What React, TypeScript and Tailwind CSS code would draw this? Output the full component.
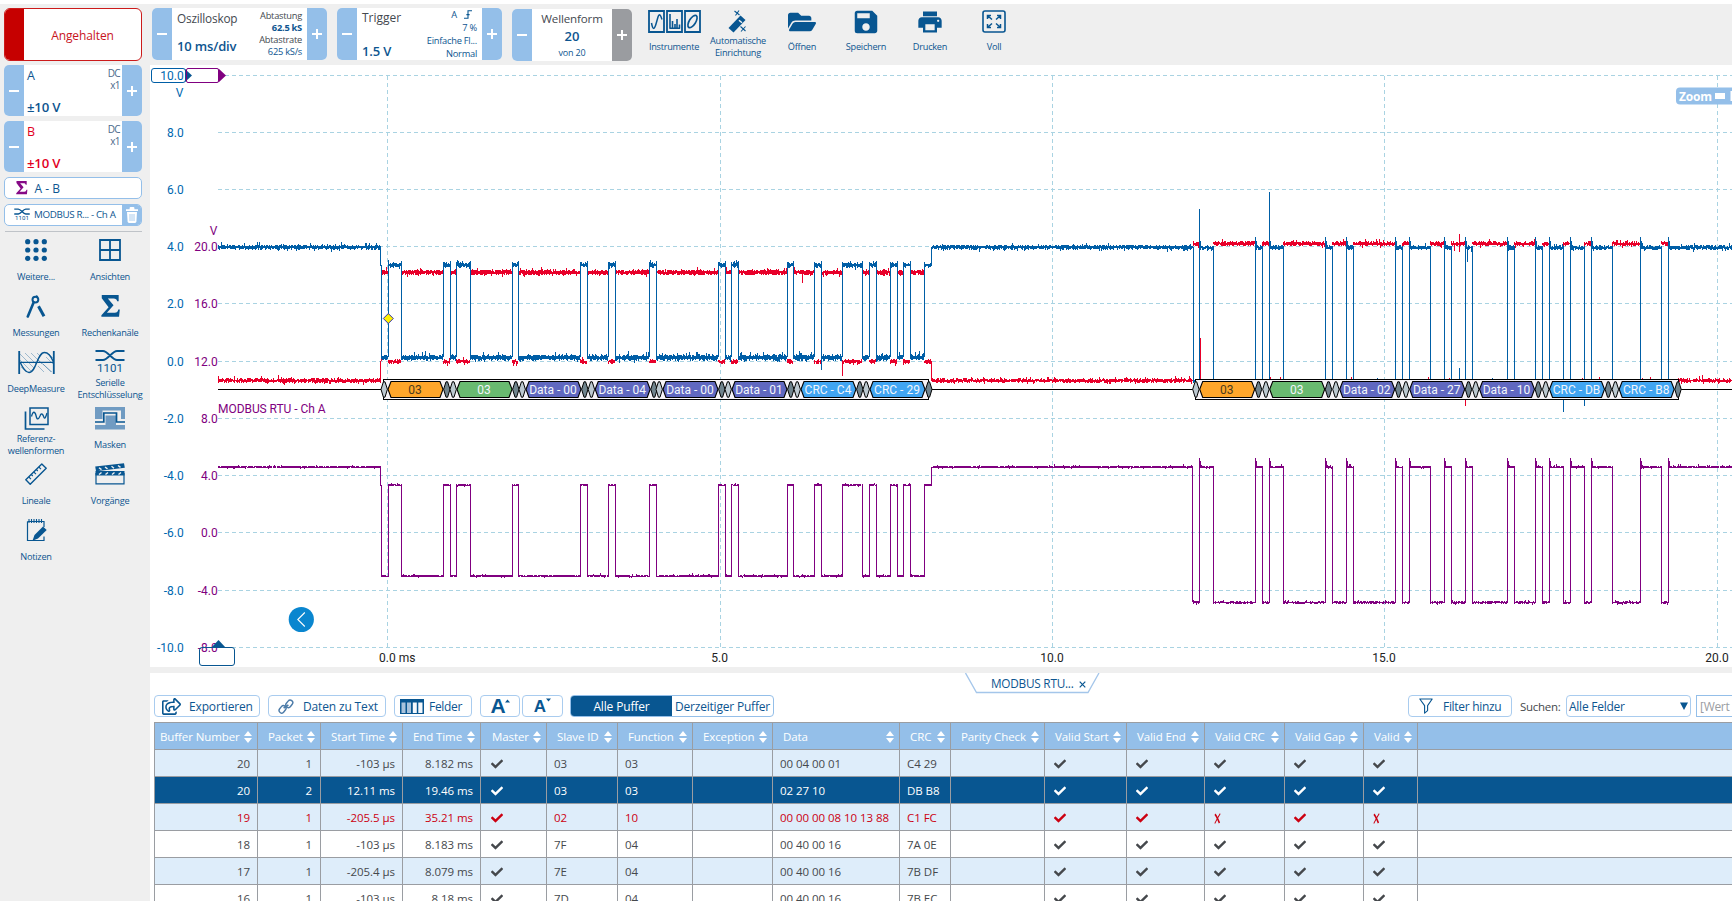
import React from 'react';
import { FaCheck, FaFolderOpen, FaRegShareSquare } from 'react-icons/fa';
import { MdPrint, MdSave } from 'react-icons/md';

/* ---------- shared pieces ---------- */

const NAVY = '#085691';

function Sign({ plus }: { plus?: boolean }) {
  return (
    <svg width="12" height="12" viewBox="0 0 12 12" shapeRendering="crispEdges" fill="#fff">
      <rect x="1" y="5" width="10" height="2" />
      {plus && <rect x="5" y="1" width="2" height="10" />}
    </svg>
  );
}

function Stepper({ children, className, gray }: { children: React.ReactNode; className: string; gray?: boolean }) {
  return (
    <div className={`flex shrink-0 overflow-hidden rounded-[5px] bg-white ${className}`}>
      <div className="flex w-5 shrink-0 items-center justify-center bg-[#94bfe9]">
        <Sign />
      </div>
      <div className="min-w-0 flex-1">{children}</div>
      <div className={`flex w-5 shrink-0 items-center justify-center ${gray ? 'bg-[#9a9ca0]' : 'bg-[#94bfe9]'}`}>
        <Sign plus />
      </div>
    </div>
  );
}

function Sigma({ size, color }: { size: number; color: string }) {
  return (
    <svg width={size} height={size * 1.15} viewBox="0 0 20 23" fill={color}>
      <path d="M.8 0H18.6V6.6H17C16.6 4.6 15.6 3.7 13.2 3.7H7.2L13.2 10.8 6.2 18.6H14.4C16.7 18.6 17.7 17.5 18.2 15.2H19.8L19 23H.4V21.4L8 12.9 .8 3.4Z" />
    </svg>
  );
}

function SerialIcon({ width, height, stroke }: { width: number; height: number; stroke: number }) {
  return (
    <svg width={width} height={height} viewBox="0 0 30 26">
      <path
        d="M.5 2H8C13 2 17 11 22 11H29.5M.5 11H8C13 11 17 2 22 2H29.5"
        fill="none"
        stroke={NAVY}
        strokeWidth={stroke}
      />
      <text x="2" y="22.8" fontSize="11.5" textLength="26" fill={NAVY} fontFamily="Roboto, sans-serif">
        1101
      </text>
    </svg>
  );
}

/* ---------- sidebar ---------- */

function Channel({ name, tone, className }: { name: string; tone: string; className: string }) {
  return (
    <Stepper className={`h-[51px] w-[138px] ${className}`}>
      <div className="flex h-full justify-between pr-[2px] pl-[3px]">
        <div className={`flex flex-col justify-between ${tone}`}>
          <span className="pt-[3px] text-[12.5px] leading-[16px] font-medium">{name}</span>
          <span className="text-[13.2px] leading-[17px] font-semibold tracking-[-0.2px]">±10 V</span>
        </div>
        <div className="pt-[2px] text-right text-[10px] leading-[12px] tracking-[-0.6px] text-[#4b6a8a]">
          <div>DC</div>
          <div>x1</div>
        </div>
      </div>
    </Stepper>
  );
}

const sideIcons: Record<string, React.ReactNode> = {
  more: (
    <svg width="22" height="22" viewBox="0 0 22 22" fill={NAVY}>
      {[2.7, 11, 19.3].map((y) => [2.7, 11, 19.3].map((x) => <circle key={`${x}-${y}`} cx={x} cy={y} r="2.6" />))}
    </svg>
  ),
  views: (
    <svg width="22" height="22" viewBox="0 0 22 22" fill="none" stroke={NAVY} strokeWidth="1.8">
      <path d="M1 1H21V21H1ZM11 1V21M1 11H21" />
    </svg>
  ),
  measure: (
    <svg width="20" height="23" viewBox="0 0 20 23" fill="none" stroke={NAVY}>
      <circle cx="9.4" cy="4.6" r="2.9" strokeWidth="2" />
      <path d="M9.8 2.5L11.5 .8" strokeWidth="2" />
      <path d="M7.6 7.5L1.8 21.5" strokeWidth="2.6" strokeLinecap="round" />
      <path d="M12.5 11.2L18 21.3" strokeWidth="3" />
    </svg>
  ),
  math: <Sigma size={19} color={NAVY} />,
  deep: (
    <svg width="37" height="23" viewBox="0 0 37 23" fill="none" stroke={NAVY}>
      <path
        d="M2 3L16 17M2 9L14 21M7 2L18 13M13 2L24 13M19 8L34 21M19 2L22 5M25 13L33 21M28 6L35 13M31 3L35 7M20 15L26 21M3 16L8 21"
        strokeWidth=".6"
        opacity=".6"
      />
      <path d="M1.2 0V23M35.8 0V23" strokeWidth="1.8" />
      <path d="M1 11.3H36" strokeWidth="1.3" />
      <path d="M2 11C5 17.5 8 21.5 11 21.5C18.5 21.5 19 1.5 26.5 1.5C30 1.5 33 5 35.5 11" strokeWidth="1.4" />
    </svg>
  ),
  serial: <SerialIcon width={30} height={26} stroke={1.8} />,
  ref: (
    <svg width="25" height="23" viewBox="0 0 25 23" fill="none" stroke={NAVY}>
      <path d="M6 1H24V17.5H6Z" strokeWidth="1.5" />
      <path d="M1.5 4.5V22H20.5" strokeWidth="1.7" />
      <path d="M7.5 9.5C9 3.5 11 4.5 12 8.5C13 13.5 14.5 12.5 16 9C17.5 5 19 7.5 20 10.5C20.8 12.5 22 9.5 23 6" strokeWidth="1.3" />
    </svg>
  ),
  masks: (
    <svg width="30" height="23" viewBox="0 0 30 23">
      <path d="M0 0H30V12H26V3.5H7.5V12H0Z" fill="#709bc2" />
      <path d="M0 18H10.5V8.5H21V18H30V22.5H0Z" fill="#709bc2" />
      <path d="M0 15H8.8V6H21.5V15H30" fill="none" stroke={NAVY} strokeWidth="1.7" />
    </svg>
  ),
  rulers: (
    <svg width="22" height="22" viewBox="0 0 22 22" fill="none" stroke={NAVY} strokeWidth="1.4">
      <path d="M.8 16.8L16.8 .9L21.2 5.2L5.2 21.2Z" strokeLinejoin="round" />
      <path d="M3.8 14L6 16.2M6.3 11.5L7.8 13M8.8 9L11 11.2M11.3 6.5L12.8 8M13.8 4L16 6.2" strokeWidth="1.1" />
    </svg>
  ),
  actions: (
    <svg width="30" height="22" viewBox="0 0 30 22">
      <path d="M1 10.5H29V20.8H1Z" fill="none" stroke={NAVY} strokeWidth="1.2" />
      <path d="M.5 8H29.5V12.5H.5Z" fill={NAVY} />
      <path d="M.2 3.5L29 .2L29.8 4.8L1 8.2Z" fill={NAVY} />
      <path
        d="M4 4.7L6.5 6.6M10 4L12.5 5.9M16.5 3.3L19 5.2M23 2.5L25.5 4.4M4 11.5L6.5 9.5M10.5 11.5L13 9.5M17 11.5L19.5 9.5M23.5 11.5L26 9.5"
        stroke="#efefef"
        strokeWidth="1.4"
      />
    </svg>
  ),
  notes: (
    <svg width="21" height="23" viewBox="0 0 21 23">
      <path d="M1.5 2.5H18V8M18 17.5V21.5H1.5V2.5" fill="none" stroke={NAVY} strokeWidth="1.2" />
      <path d="M3 0V4M5.5 0V4M8 0V4M10.5 0V4M13 0V4M15.5 0V4" stroke={NAVY} strokeWidth="1.1" />
      <path d="M6.5 21.8L8.5 16L17 7.5L20.7 11L12 19.5Z" fill={NAVY} />
    </svg>
  ),
};

const sideItems: [string, string[]][] = [
  ['more', ['Weitere...']],
  ['views', ['Ansichten']],
  ['measure', ['Messungen']],
  ['math', ['Rechenkanäle']],
  ['deep', ['DeepMeasure']],
  ['serial', ['Serielle', 'Entschlüsselung']],
  ['ref', ['Referenz-', 'wellenformen']],
  ['masks', ['Masken']],
  ['rulers', ['Lineale']],
  ['actions', ['Vorgänge']],
  ['notes', ['Notizen']],
];

function Sidebar() {
  return (
    <aside className="flex w-[150px] shrink-0 flex-col bg-[#efefef] pt-1 text-[#0d5590]">
      <div className="ml-1 flex h-[53px] w-[138px] shrink-0 overflow-hidden rounded-[6px] border border-[#cc1a1a] bg-white">
        <div className="w-[19px] bg-[#c60000]" />
        <div className="flex flex-1 items-center justify-center pt-[2px] text-[12px] tracking-[-0.1px] text-[#c8141c]">
          Angehalten
        </div>
      </div>
      <Channel name="A" tone="text-[#0d5590]" className="mt-1 ml-1" />
      <Channel name="B" tone="text-[#e2001f]" className="mt-[5px] ml-1" />
      <div className="mt-[5px] ml-1 flex h-[22px] w-[138px] shrink-0 items-center rounded-[5px] border border-[#94bfe9] bg-white pl-[11px]">
        <Sigma size={11.5} color="#860a86" />
        <span className="ml-[7px] pt-px text-[12px] font-medium">A - B</span>
      </div>
      <div className="mt-[5px] ml-1 flex h-[22px] w-[138px] shrink-0 overflow-hidden rounded-[5px] border border-[#94bfe9] bg-white">
        <div className="flex flex-1 items-center pl-[9px]">
          <SerialIcon width={16} height={14} stroke={2.6} />
          <span className="ml-[4px] pt-px text-[9.8px] font-medium tracking-[-0.35px] whitespace-nowrap">
            MODBUS R... - Ch A
          </span>
        </div>
        <div className="flex w-[19px] items-center justify-center bg-[#94bfe9]">
          <svg width="12" height="16" viewBox="0 0 12 16" fill="#fff">
            <path d="M0 2.2H3.6V1Q3.6 0 4.6 0H7.4Q8.4 0 8.4 1V2.2H12V4H0Z" />
            <path d="M1 5H11L10.4 14.6Q10.3 16 9 16H3Q1.7 16 1.6 14.6Z" />
            <path d="M4 7V14M6 7V14M8 7V14" stroke="#94bfe9" strokeWidth=".8" />
          </svg>
        </div>
      </div>
      <div className="mt-[5px] ml-[5px] h-px w-[137px] shrink-0 bg-[#bfc3c8]" />
      <div className="mt-1 grid auto-rows-[56px] grid-cols-[72px_76px]">
        {sideItems.map(([key, lines]) => (
          <div key={key} className="flex flex-col items-center">
            <div className="mt-[2px] flex h-6 items-center justify-center">{sideIcons[key]}</div>
            <div className="mt-px flex h-[27px] flex-col justify-center text-center text-[9.2px] leading-[12px] tracking-[-0.25px] whitespace-nowrap">
              {lines.map((l) => (
                <div key={l}>{l}</div>
              ))}
            </div>
          </div>
        ))}
      </div>
    </aside>
  );
}

/* ---------- top bar ---------- */

const tools: [string[], React.ReactNode][] = [
  [
    ['Instrumente'],
    <svg key="i" width="53" height="23" viewBox="0 0 53 23" fill="none" stroke={NAVY}>
      <path d="M1 1H16V22H1ZM19 1H34V22H19ZM37 1H52V22H37Z" strokeWidth="1.8" />
      <path d="M3.5 13C5 21 6.5 19 8 14L10 7C11.5 3 12.5 5 14 9.5" strokeWidth="1.5" />
      <path d="M22 4V18.5M24.5 11V18.5M27 14V18.5M29 9V18.5M31.5 14.5V18.5M21.5 18.3H32" strokeWidth="1.6" />
      <ellipse cx="44.5" cy="11.5" rx="3.2" ry="7" transform="rotate(32 44.5 11.5)" strokeWidth="1.7" />
    </svg>,
  ],
  [
    ['Automatische', 'Einrichtung'],
    <svg key="a" width="20" height="23" viewBox="0 0 20 23">
      <path d="M.5 18L12.5 5.5L17.5 10L5.5 22.5Z" fill={NAVY} />
      <path d="M11 10.2L14 12.8" stroke="#efefef" strokeWidth="1.5" />
      <path d="M6.5 1L11.5 5M11 .5L7.5 5.5M12.5 16.5L17.5 21M17.5 16.5L13 21.5" stroke={NAVY} strokeWidth="1.1" />
    </svg>,
  ],
  [['Öffnen'], <FaFolderOpen key="o" size={28} color={NAVY} />],
  [['Speichern'], <MdSave key="s" size={30} color={NAVY} />],
  [['Drucken'], <MdPrint key="p" size={28} color={NAVY} />],
  [
    ['Voll'],
    <svg key="v" width="24" height="23" viewBox="0 0 24 23" fill="none" stroke={NAVY}>
      <rect x="1" y="1" width="22" height="21" rx="2" strokeWidth="1.6" />
      <path d="M5.5 9V5.5H9M6 6L10 9.5M15 5.5H18.5V9M18 6L14 9.5M5.5 14V17.5H9M6 17L10 13.5M18.5 14V17.5H15M18 17L14 13.5" strokeWidth="1.5" />
    </svg>,
  ],
];

function TopBar() {
  return (
    <header className="flex h-[61px] shrink-0 bg-[#efefef] pt-1 pl-[2px] text-[#0d5590]">
      <Stepper className="h-[52px] w-[175px]">
        <div className="flex h-full justify-between pr-[5px] pl-[5px] whitespace-nowrap">
          <div>
            <div className="pt-[2px] text-[11.8px] leading-[17px] tracking-[-0.2px] text-[#44494f]">Oszilloskop</div>
            <div className="mt-[11px] text-[13px] leading-[17px] font-semibold tracking-[-0.15px]">10 ms/div</div>
          </div>
          <div className="pt-[2px] text-right text-[9.3px] leading-[12px] tracking-[-0.25px]">
            <div className="text-[#44494f]">Abtastung</div>
            <div className="font-bold">62.5 kS</div>
            <div className="text-[#44494f]">Abtastrate</div>
            <div>625 kS/s</div>
          </div>
        </div>
      </Stepper>
      <Stepper className="ml-[10px] h-[52px] w-[165px]">
        <div className="flex h-full justify-between pr-[5px] pl-[5px] whitespace-nowrap">
          <div>
            <div className="pt-px text-[12px] leading-[17px] text-[#44494f]">Trigger</div>
            <div className="mt-[17px] text-[13px] leading-[17px] font-semibold tracking-[-0.15px]">1.5 V</div>
          </div>
          <div className="text-right text-[9.3px] leading-[13px] tracking-[-0.25px]">
            <div className="flex items-center justify-end gap-[7px] pr-[5px]">
              <span>A</span>
              <svg width="8" height="9" viewBox="0 0 8 9" fill="none" stroke={NAVY} strokeWidth="1.1">
                <path d="M0 8.3H4V.8H8M2.4 4.6H5.6" />
              </svg>
            </div>
            <div>7 %</div>
            <div>Einfache Fl...</div>
            <div>Normal</div>
          </div>
        </div>
      </Stepper>
      <Stepper className="mt-px ml-[10px] h-[52px] w-[120px]" gray>
        <div className="flex flex-col items-center">
          <div className="pt-px text-[11.6px] leading-[17px] tracking-[-0.15px] text-[#44494f]">Wellenform</div>
          <div className="mt-px text-[13px] leading-4 font-semibold">20</div>
          <div className="mt-[2px] text-[9px] leading-[14px] tracking-[-0.2px]">von 20</div>
        </div>
      </Stepper>
      <div className="ml-[10px] flex">
        {tools.map(([lines, icon]) => (
          <div key={lines[0]} className="flex w-16 flex-col items-center">
            <div className="mt-[1px] flex h-[25px] items-center justify-center">{icon}</div>
            <div className="mt-px flex h-[24px] flex-col justify-center text-center text-[9.2px] leading-[12px] tracking-[-0.25px] whitespace-nowrap">
              {lines.map((l) => (
                <div key={l}>{l}</div>
              ))}
            </div>
          </div>
        ))}
      </div>
    </header>
  );
}

/* ---------- waveform view ---------- */

const BLUE = '#005ea6';
const RED = '#e8002a';
const PURPLE = '#800080';

function rng(seed: number) {
  let s = seed;
  return () => {
    s = (s * 1664525 + 1013904223) % 4294967296;
    return s / 4294967296;
  };
}

// One vertical stroke per pixel column, as a sampled trace is rasterised.
function band(x0: number, x1: number, y: number, amp: number, rand: () => number) {
  let d = '';
  for (let x = Math.floor(x0); x < x1; x++) {
    const r = rand();
    const spike = r > 0.94 ? amp * 1.1 : 0;
    const up = amp * (0.35 + rand() * 0.85) + spike;
    const down = amp * (0.35 + rand() * 0.85) + (r < 0.05 ? amp * 0.8 : 0);
    d += `M${x + 0.5} ${(y - up).toFixed(1)}V${(y + down).toFixed(1)}`;
  }
  return d;
}

// Alternating x positions: rise, fall, rise, fall ...
const burst1 = [
  388, 401, 443, 450, 456, 470, 512, 518, 580, 587, 608, 615, 649, 656, 718, 725, 731, 738, 787, 793, 814, 821, 842, 862,
  869, 876, 890, 897, 903, 910, 924, 931,
];
const burst2 = [
  1199, 1213, 1255, 1262, 1269, 1283, 1325, 1332, 1346, 1353, 1395, 1402, 1409, 1430, 1444, 1451, 1465, 1472, 1507, 1514,
  1535, 1542, 1549, 1563, 1570, 1584, 1591, 1612, 1640, 1661, 1668,
];

function buildTraces() {
  const r = rng(7);
  let blue = band(218, 381, 247.2, 2.2, r);
  let red = band(218, 381, 380.5, 2.2, r);
  let purple = band(218, 381, 467, 1.2, r);
  blue += 'M380.5 247V266M381.5 265V357';
  red += 'M380.5 380V361M381.5 361V272';
  purple += 'M380.5 467V486M381.5 485V576';

  let low = 381;
  for (let i = 0; i < burst1.length; i += 2) {
    const [up, down] = [burst1[i], burst1[i + 1]];
    blue += band(low, up, 357.5, 2.8, r) + band(up, down, 265, 2.4, r);
    red += band(low, up, 272.4, 2.6, r) + band(up, down, 361.5, 2.2, r);
    purple += band(low, up, 576, 1.2, r) + band(up, down, 485, 1.1, r);
    blue += `M${up + 0.5} 262V357`;
    purple += `M${up + 0.5} 484V577`;
    if (i < burst1.length - 2) {
      blue += `M${down + 0.5} 261V357`;
      purple += `M${down + 0.5} 484V577`;
    }
    low = down;
  }
  blue += 'M931.5 266V247M821.5 357V370M793.5 349V357';
  red += 'M931.5 361V381M842.5 361V376M802.5 272V283';
  purple += 'M931.5 486V467';

  blue += band(932, 1193, 247.2, 2.2, r);
  red += band(932, 1193, 380.5, 2, r);
  purple += band(932, 1193, 467, 1.2, r);
  blue += 'M1193.5 247V381';
  purple += 'M1192.5 467V602';

  low = 1193;
  for (let i = 0; i < burst2.length; i += 2) {
    const up = burst2[i];
    const down = burst2[i + 1] ?? 1732;
    red += band(low, up, 243.6, 2.2, r) + band(up, down, down === 1732 ? 380.5 : 381.2, 2, r);
    blue += band(up, down, 247.5, 2.2, r) + band(low, up, 381.5, 1.4, r);
    purple += band(low, up, 602.4, 1.3, r) + band(up, down, 467, 1.2, r);
    blue += `M${up + 0.5} 237V390M${up + 1.5} 241V248`;
    purple += `M${up + 0.5} 458V603M${up + 1.5} 461V468`;
    if (down !== 1732) {
      blue += `M${down + 0.5} 246V390`;
      purple += `M${down + 0.5} 466V604`;
    }
    low = down;
  }
  blue += 'M1199.5 209V240M1269.5 192V240M1467.5 247V262M1459.5 368V381M1563.5 390V412M1584.5 390V406';
  red += 'M1200.5 338V381M1459.5 234V252M1454.5 243V251M1465.5 390V406M1702.5 375V381';
  return { blue, red, purple };
}

const traces = buildTraces();

type Packet = [number, string, string];
const packets1: Packet[] = [
  [388, '03', '#ffa62b'],
  [457, '03', '#69ba70'],
  [526, 'Data - 00', '#6068c0'],
  [595.2, 'Data - 04', '#6068c0'],
  [663, 'Data - 00', '#6068c0'],
  [732, 'Data - 01', '#6068c0'],
  [801, 'CRC - C4', '#41a5f2'],
  [870, 'CRC - 29', '#41a5f2'],
];
const packets2: Packet[] = [
  [1199.7, '03', '#ffa62b'],
  [1269.7, '03', '#69ba70'],
  [1339.7, 'Data - 02', '#6068c0'],
  [1409.7, 'Data - 27', '#6068c0'],
  [1479.5, 'Data - 10', '#6068c0'],
  [1549.5, 'CRC - DB', '#41a5f2'],
  [1619.2, 'CRC - B8', '#41a5f2'],
];

function Diamond({ x, fill }: { x: number; fill: string }) {
  return (
    <path
      d={`M${x} 389.3L${x + 2.4} 381.8H${x + 4}L${x + 6.4} 389.3L${x + 4} 397.2H${x + 2.4}Z`}
      fill={fill}
      stroke="#000"
      strokeWidth="1"
    />
  );
}

function Decoder({ x0, x1, packets }: { x0: number; x1: number; packets: Packet[] }) {
  return (
    <g>
      <rect x={x0} y="379.5" width={x1 - x0} height="20" fill="#f6f3f7" stroke="#000" shapeRendering="crispEdges" />
      {packets.map(([x, label, fill]) => (
        <g key={x}>
          <Diamond x={x - 7} fill="#bcc8d0" />
          <Diamond x={x + 55.6} fill="#70838d" />
          <path
            d={`M${x} 389.3L${x + 3} 381.5H${x + 52}L${x + 55} 389.3L${x + 52} 397.5H${x + 3}Z`}
            fill={fill}
            stroke="#000"
            strokeWidth="1.1"
          />
          <text
            x={x + 27}
            y="394"
            textAnchor="middle"
            fontSize={12}
            fill={fill === '#ffa62b' ? '#4b3a1c' : '#f2f6fb'}
          >
            {label}
          </text>
        </g>
      ))}
    </g>
  );
}

const gridY = [75.5, 132.5, 189.5, 246.5, 303.5, 361.5, 418.5, 475.5, 532.5, 590.5, 647.5];
const gridX = [387.5, 720.5, 1052.5, 1384.5, 1717.5];
const leftLabels = ['10.0', '8.0', '6.0', '4.0', '2.0', '0.0', '-2.0', '-4.0', '-6.0', '-8.0', '-10.0'];
const mathLabels = ['20.0', '16.0', '12.0', '8.0', '4.0', '0.0', '-4.0', '-8.0'];

function Scope() {
  return (
    <svg
      width="1582"
      height="602"
      viewBox="150 65 1582 602"
      className="block shrink-0 bg-white"
      fontFamily="Roboto, sans-serif"
      fontSize="12"
    >
      <g stroke="#a9d3e2" strokeDasharray="4 3" shapeRendering="crispEdges">
        {gridY.map((y) => (
          <path key={y} d={`M218 ${y}H1732`} />
        ))}
        {gridX.map((x) => (
          <path key={x} d={`M${x} 76V647`} />
        ))}
      </g>

      <g fill="#0068b0" textAnchor="end">
        {leftLabels.map((t, i) => (
          <text key={t} x="183.7" y={gridY[i] + 4.4}>
            {t}
          </text>
        ))}
        <text x="183.5" y="97">V</text>
      </g>
      <g fill={PURPLE} textAnchor="end">
        {mathLabels.map((t, i) => (
          <text key={t} x="217.7" y={gridY[i + 3] + 4.4}>
            {t}
          </text>
        ))}
        <text x="217.5" y="235">V</text>
      </g>
      <g fill="#222">
        <text x="379" y="662">0.0 ms</text>
        <text x="719.7" y="662" textAnchor="middle">5.0</text>
        <text x="1052" y="662" textAnchor="middle">10.0</text>
        <text x="1384" y="662" textAnchor="middle">15.0</text>
        <text x="1717" y="662" textAnchor="middle">20.0</text>
      </g>

      <path d="M218 389.5H1732" stroke="#000" shapeRendering="crispEdges" />
      <g fill="none" shapeRendering="crispEdges" strokeWidth="1">
        <path d={traces.red} stroke={RED} />
        <path d={traces.blue} stroke={BLUE} />
        <path d={traces.purple} stroke={PURPLE} />
      </g>
      <path d="M1200.5 338V379" stroke={RED} shapeRendering="crispEdges" />
      <Decoder x0={383.5} x1={928.5} packets={packets1} />
      <Decoder x0={1195.5} x1={1678.5} packets={packets2} />
      <path d="M1465.5 400V406" stroke={RED} shapeRendering="crispEdges" />

      <text x="218" y="413" fill={PURPLE} textLength="107.5">MODBUS RTU - Ch A</text>

      <path d="M388.3 313.5L393.3 318.5L388.3 323.5L383.3 318.5Z" fill="#fff200" stroke="#3030b0" />

      <rect x="151.5" y="68.5" width="34" height="14" rx="2.5" fill="none" stroke="#005ea6" />
      <path d="M185 69L192 75.5L185 82Z" fill="#085691" />
      <rect x="186.5" y="68.5" width="32" height="14" rx="1.5" fill="none" stroke={PURPLE} />
      <path d="M218.5 68.5L226 75.5L218.5 82.5Z" fill={PURPLE} />

      <rect x="199.5" y="647.5" width="35" height="18" rx="2.5" fill="none" stroke="#085691" />
      <path d="M211.5 647.5L218.5 640L225.5 647.5Z" fill="#085691" />

      <circle cx="301.3" cy="619.5" r="12.6" fill="#0a86cf" />
      <path d="M304.8 612.5L297.8 619.5L304.8 626.5" fill="none" stroke="#fff" strokeWidth="1.1" />

      <rect x="1676" y="87.5" width="70" height="17" rx="4" fill="#94bfe9" />
      <text x="1679" y="101" fill="#fff" fontFamily="'Open Sans', sans-serif" fontWeight="700" textLength="33">
        Zoom
      </text>
      <path d="M1715 93H1725V99H1715ZM1730.5 91H1732V101H1730.5Z" fill="#fff" />
    </svg>
  );
}

/* ---------- decode table ---------- */

const columns: [string, string][] = [
  ['Buffer Number', 'w-[104px] pl-[6px]'],
  ['Packet', 'w-[63px] pl-[10px]'],
  ['Start Time', 'w-[82px] pl-[10px]'],
  ['End Time', 'w-[78px] pl-[10px]'],
  ['Master', 'w-[66px] pl-[11px]'],
  ['Slave ID', 'w-[71px] pl-[10px]'],
  ['Function', 'w-[75px] pl-[10px]'],
  ['Exception', 'w-[80px] pl-[10px]'],
  ['Data', 'w-[127px] pl-[10px]'],
  ['CRC', 'w-[51px] pl-[10px]'],
  ['Parity Check', 'w-[94px] pl-[10px]'],
  ['Valid Start', 'w-[82px] pl-[10px]'],
  ['Valid End', 'w-[78px] pl-[10px]'],
  ['Valid CRC', 'w-[80px] pl-[10px]'],
  ['Valid Gap', 'w-[79px] pl-[10px]'],
  ['Valid', 'w-[54px] pl-[10px]'],
];

const cellBase = [
  'w-[104px] justify-end pr-[7px]',
  'w-[63px] justify-end pr-[8px]',
  'w-[82px] justify-end pr-[7px]',
  'w-[78px] justify-end pr-[7px]',
  'w-[66px] pl-[10px]',
  'w-[71px] pl-[7px]',
  'w-[75px] pl-[7px]',
  'w-[80px] pl-[7px]',
  'w-[127px] pl-[7px]',
  'w-[51px] pl-[7px]',
  'w-[94px] pl-[7px]',
  'w-[82px] pl-[9px]',
  'w-[78px] pl-[9px]',
  'w-[80px] pl-[9px]',
  'w-[79px] pl-[9px]',
  'w-[54px] pl-[9px]',
];

const rows: { tone: string; cells: string[] }[] = [
  { tone: 'bg-[#deedfa] text-[#45484c]', cells: ['20', '1', '-103 µs', '8.182 ms', 'y', '03', '03', '', '00 04 00 01', 'C4 29', '', 'y', 'y', 'y', 'y', 'y'] },
  { tone: 'bg-[#085691] text-white font-medium', cells: ['20', '2', '12.11 ms', '19.46 ms', 'y', '03', '03', '', '02 27 10', 'DB B8', '', 'y', 'y', 'y', 'y', 'y'] },
  { tone: 'bg-[#deedfa] text-[#cc0011]', cells: ['19', '1', '-205.5 µs', '35.21 ms', 'y', '02', '10', '', '00 00 00 08 10 13 88', 'C1 FC', '', 'y', 'y', 'n', 'y', 'n'] },
  { tone: 'bg-white text-[#45484c]', cells: ['18', '1', '-103 µs', '8.183 ms', 'y', '7F', '04', '', '00 40 00 16', '7A 0E', '', 'y', 'y', 'y', 'y', 'y'] },
  { tone: 'bg-[#deedfa] text-[#45484c]', cells: ['17', '1', '-205.4 µs', '8.079 ms', 'y', '7E', '04', '', '00 40 00 16', '7B DF', '', 'y', 'y', 'y', 'y', 'y'] },
  { tone: 'bg-white text-[#45484c]', cells: ['16', '1', '-103 µs', '8.18 ms', 'y', '7D', '04', '', '00 40 00 16', '7B EC', '', 'y', 'y', 'y', 'y', 'y'] },
];

function CellValue({ v }: { v: string }) {
  if (v === 'y') return <FaCheck size={12} />;
  if (v === 'n')
    return (
      <svg width="7" height="11" viewBox="0 0 9 11" preserveAspectRatio="none" fill="none" stroke="currentColor">
        <path d="M1.2 1.2C3.5 3 5.5 7 7 10" strokeWidth="1.9" />
        <path d="M8 .6C5.5 3.5 3.5 6.5 1 10.5" strokeWidth="1.2" />
      </svg>
    );
  return <span>{v}</span>;
}

function DecodeTable() {
  return (
    <div className="ml-1 w-[1578px] border-t border-l border-[#9a9da2] text-[11.5px] tracking-[-0.05px] whitespace-nowrap">
      <div className="flex h-[27px] border-b border-[#9a9da2] bg-[#94bfe9] text-white">
        {columns.map(([name, cls], i) => (
          <div
            key={name}
            className={`flex shrink-0 items-center justify-between border-r border-[#9a9da2] pt-[2px] pr-[5px] ${cls} ${i === 0 ? '-ml-px' : ''}`}
          >
            <span className="tracking-[-0.1px]">{name}</span>
            <svg width="8" height="12" viewBox="0 0 8 12" fill="#fff">
              <path d="M0 5L4 0L8 5ZM0 7L4 12L8 7Z" />
            </svg>
          </div>
        ))}
      </div>
      {rows.map((row, r) => (
        <div key={r} className={`flex h-[27px] border-b border-[#9a9da2] ${row.tone}`}>
          {row.cells.map((v, i) => (
            <div
              key={i}
              className={`flex shrink-0 items-center border-r border-[#9a9da2] pt-[2px] ${cellBase[i]} ${i === 0 ? '-ml-px' : ''}`}
            >
              <CellValue v={v} />
            </div>
          ))}
        </div>
      ))}
    </div>
  );
}

const btn = 'flex h-[22px] shrink-0 items-center rounded-[4px] border border-[#a9ccef] bg-white whitespace-nowrap';

function DecodePanel() {
  return (
    <section className="flex flex-1 flex-col overflow-hidden bg-white text-[12px] tracking-[-0.15px] text-[#0d5590]">
      <div className="flex h-[22px] shrink-0 pl-[815px]">
        <div className="relative flex h-[22px] w-[135px] items-center">
          <svg className="absolute inset-0" width="135" height="21" viewBox="0 0 135 21" fill="none">
            <path d="M.5 0L11.5 19.5H123L134 0" stroke="#a4c6ea" strokeWidth="1.3" />
          </svg>
          <span className="ml-[26px] text-[11.8px] tracking-[-0.25px]">MODBUS RTU...</span>
          <svg className="mr-[14px] ml-auto" width="7" height="7" viewBox="0 0 7 7" stroke={NAVY} strokeWidth="1.2">
            <path d="M.7 .7L6.3 6.3M6.3 .7L.7 6.3" />
          </svg>
        </div>
      </div>
      <div className="flex h-[27px] shrink-0 pl-1">
        <div className={`${btn} w-[106px] pl-[7px]`}>
          <FaRegShareSquare size={19} color={NAVY} />
          <span className="ml-[8px] pt-[2px]">Exportieren</span>
        </div>
        <div className={`${btn} ml-2 w-[118px] pl-[9px]`}>
          <svg width="16" height="15" viewBox="0 0 16 15" fill="none" stroke="#4c7ba8" strokeWidth="1.4">
            <rect x="-4" y="-2.6" width="8" height="5.2" rx="2.6" transform="translate(4.6 10.3) rotate(-52)" />
            <rect x="-4" y="-2.6" width="8" height="5.2" rx="2.6" transform="translate(11.3 4.8) rotate(-52)" />
            <path d="M5.6 9L10.4 6" strokeWidth="1.6" />
          </svg>
          <span className="ml-[9px] pt-[2px]">Daten zu Text</span>
        </div>
        <div className={`${btn} ml-2 w-[78px] pl-[5px]`}>
          <svg width="24" height="15" viewBox="0 0 24 15">
            <rect x="0" y="0" width="24" height="15" fill={NAVY} />
            <path d="M1.5 3.5H5.5V14H1.5ZM7 3.5H11V14H7Z" fill="#a9c3dc" />
            <path d="M12.8 3.5H16.8V14H12.8ZM18.3 3.5H22.5V14H18.3Z" fill="#f4f8fc" />
          </svg>
          <span className="ml-[5px] pt-[2px] tracking-[-0.3px]">Felder</span>
        </div>
        <div className={`${btn} ml-2 w-[40px] justify-center`}>
          <span className="font-['Liberation_Sans',sans-serif] text-[21px] leading-5 font-bold tracking-normal text-[#085691]">A</span>
          <svg className="-ml-px mb-[10px]" width="5" height="4" viewBox="0 0 5 4" fill={NAVY}>
            <path d="M0 3.5L2.5 .5L5 3.5Z" />
          </svg>
        </div>
        <div className={`${btn} ml-[2px] w-[41px] justify-center`}>
          <span className="pt-[2px] font-['Liberation_Sans',sans-serif] text-[17px] leading-[18px] font-bold tracking-normal text-[#085691]">A</span>
          <svg className="mb-[12px]" width="5" height="4" viewBox="0 0 5 4" fill={NAVY}>
            <path d="M0 .5L2.5 3.5L5 .5Z" />
          </svg>
        </div>
        <div className="ml-[7px] flex h-[22px] w-[204px] shrink-0 overflow-hidden rounded-[4px] border border-[#94bfe9] whitespace-nowrap">
          <div className="flex w-[101px] items-center justify-center bg-[#085691] pt-[2px] font-medium text-white">Alle Puffer</div>
          <div className="flex flex-1 items-center justify-center pt-[2px] tracking-[-0.2px]">Derzeitiger Puffer</div>
        </div>
        <div className={`${btn} ml-[634px] w-[104px] pl-[10px]`}>
          <svg width="14" height="16" viewBox="0 0 14 16" fill="none" stroke={NAVY} strokeWidth="1.1">
            <path d="M.8 1H13.2L8.6 7.6V12.6L5.6 15.2V7.6Z" strokeLinejoin="round" />
          </svg>
          <span className="ml-[10px] pt-[2px] tracking-[-0.3px]">Filter hinzu</span>
        </div>
        <span className="ml-[8px] flex h-[22px] items-center pt-[2px] text-[11.5px] tracking-[-0.3px] text-[#45484c]">Suchen:</span>
        <div className="ml-auto flex shrink-0">
          <div className={`${btn} w-[125px] justify-between pr-[2px] pl-[2px]`}>
            <span className="pt-[2px] tracking-[-0.25px]">Alle Felder</span>
            <svg width="8" height="8" viewBox="0 0 8 8" fill={NAVY}>
              <path d="M0 .5H8L4 8Z" />
            </svg>
          </div>
          <div className="ml-[5px] flex h-[22px] w-[36px] items-center overflow-hidden border border-r-0 border-[#94bfe9] pt-[2px] pl-[3px] tracking-[-0.3px] whitespace-nowrap text-[#9a9da2]">
            [Wert
          </div>
        </div>
      </div>
      <DecodeTable />
    </section>
  );
}

export default function App() {
  return (
    <div className="flex h-[901px] w-[1732px] flex-col overflow-hidden bg-white pt-1 font-['Open_Sans',sans-serif]">
      <div className="flex min-h-0 flex-1">
        <Sidebar />
        <main className="flex w-[1582px] flex-col">
          <TopBar />
          <Scope />
          <div className="h-[6px] shrink-0 bg-[#efefef]" />
          <DecodePanel />
        </main>
      </div>
    </div>
  );
}
